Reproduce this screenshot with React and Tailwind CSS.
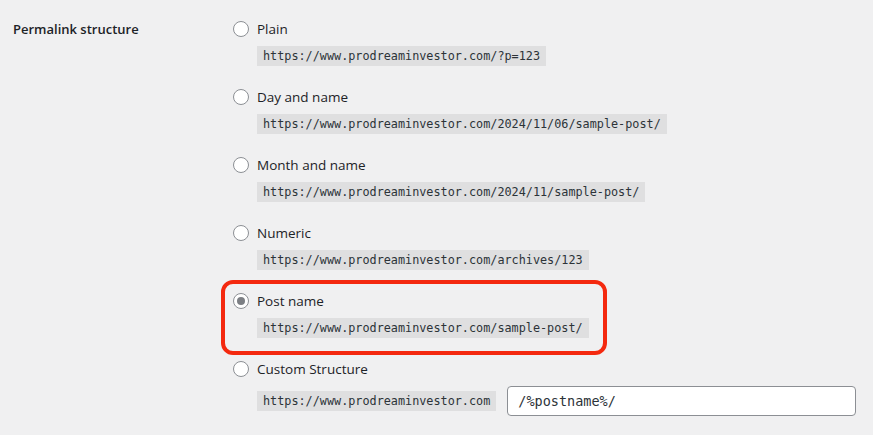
import React from 'react';

const options = [
  { label: 'Plain', url: 'https://www.prodreaminvestor.com/?p=123' },
  { label: 'Day and name', url: 'https://www.prodreaminvestor.com/2024/11/06/sample-post/' },
  { label: 'Month and name', url: 'https://www.prodreaminvestor.com/2024/11/sample-post/' },
  { label: 'Numeric', url: 'https://www.prodreaminvestor.com/archives/123' },
  { label: 'Post name', url: 'https://www.prodreaminvestor.com/sample-post/', checked: true, highlight: true },
];

const mono = { fontFamily: '"DejaVu Sans Mono", "Liberation Mono", monospace' };

function Radio({ checked }) {
  return (
    <span className="w-4 h-4 rounded-full border border-[#8c8f94] bg-white flex items-center justify-center shrink-0">
      {checked && <span className="w-2 h-2 rounded-full bg-[#7c7f84]" />}
    </span>
  );
}

function Code({ children }) {
  return (
    <code
      className="block w-fit h-5 leading-5 px-[6px] bg-[#dfdfe0] text-[#2c3338] text-[11.8px]"
      style={mono}
    >
      {children}
    </code>
  );
}

export default function App() {
  return (
    <div
      className="w-[873px] h-[435px] bg-[#f0f0f1] text-[#1d2327] overflow-hidden flex"
      style={{ fontFamily: '"Open Sans", "Noto Sans", sans-serif' }}
    >
      {/* Left label */}
      <div className="w-[233px] pl-[13px] pt-[19px] shrink-0">
        <div className="h-5 leading-5 text-[13px] font-semibold">Permalink structure</div>
      </div>

      {/* Options */}
      <div className="flex flex-col pt-[19px] gap-[21px]">
        {options.map((o) => (
          <div key={o.label} className="relative">
            <div className="flex items-center gap-2 h-5">
              <Radio checked={o.checked} />
              <span className="text-[13.5px] font-medium leading-5">{o.label}</span>
            </div>
            <div className="pl-6 mt-[7px]">
              <Code>{o.url}</Code>
            </div>
            {o.highlight && (
              <div className="absolute left-[-12px] top-[-11px] w-[386px] h-[75px] border-4 border-[#f4290f] rounded-[12px] pointer-events-none" />
            )}
          </div>
        ))}

        <div>
          <div className="flex items-center gap-2 h-5">
            <Radio />
            <span className="text-[13.5px] font-medium leading-5">Custom Structure</span>
          </div>
          <div className="pl-6 mt-[7px] flex items-center gap-[11px]">
            <Code>https://www.prodreaminvestor.com</Code>
            <input
              readOnly
              value="/%postname%/"
              className="w-[349px] h-[30px] px-[10px] bg-white border border-[#8c8f94] rounded-[4px] text-[#2c3338] outline-none text-[13.5px]"
              style={mono}
            />
          </div>
        </div>
      </div>
    </div>
  );
}
